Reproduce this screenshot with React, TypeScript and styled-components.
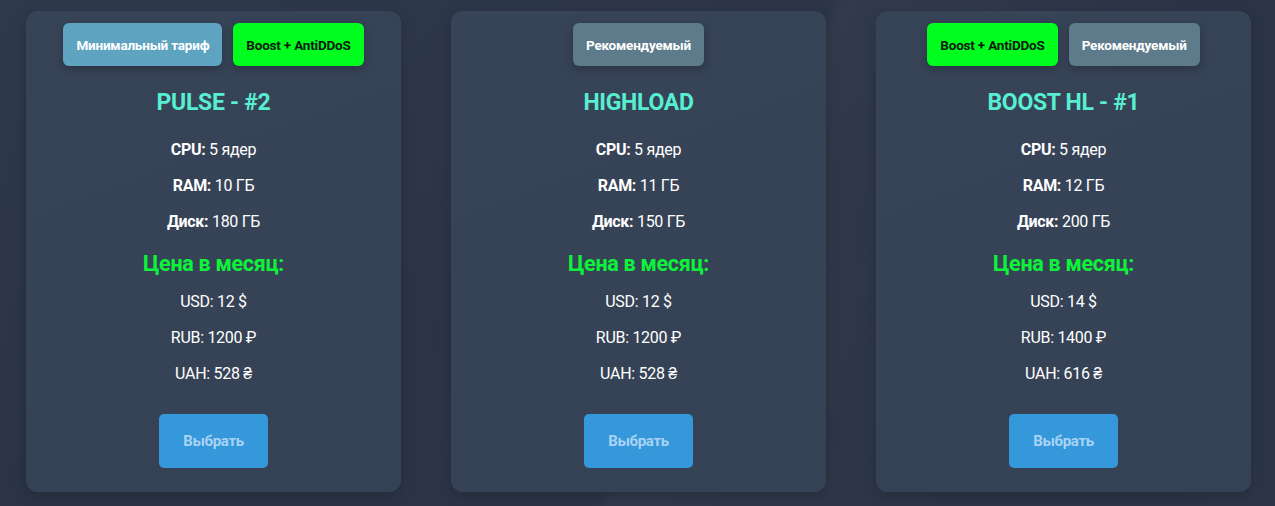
import React from "react";
import styled, { createGlobalStyle } from "styled-components";

const Global = createGlobalStyle`
  html, body { margin: 0; padding: 0; }
  body {
    width: 1275px;
    height: 506px;
    overflow: hidden;
    font-family: "Roboto", "Liberation Sans", sans-serif;
    background: #2c3547;
  }
`;

const Page = styled.div`
  width: 1275px;
  height: 506px;
  box-sizing: border-box;
  padding: 11px 24px 0 26px;
  display: grid;
  grid-template-columns: repeat(3, 375px);
  column-gap: 50px;
  align-items: start;
  background:
    linear-gradient(115deg, rgba(255,255,255,0) 0%, rgba(255,255,255,0) 55%, rgba(255,255,255,0.025) 56%, rgba(255,255,255,0.0) 80%),
    linear-gradient(160deg, #2f394c 0%, #2b3446 50%, #2c3547 100%);
`;

const Card = styled.section`
  height: 481px;
  box-sizing: border-box;
  background: linear-gradient(160deg, #374457 0%, #364356 60%, #354255 100%);
  border-radius: 12px;
  box-shadow: 0 4px 14px rgba(0, 0, 0, 0.18);
  padding: 12px 10px 0;
  display: flex;
  flex-direction: column;
  align-items: center;
  color: #ffffff;
`;

const Badges = styled.div`
  display: flex;
  justify-content: center;
  gap: 11px;
`;

const Badge = styled.span<{ $bg: string; $fg: string }>`
  height: 43px;
  box-sizing: border-box;
  padding: 0 13px;
  display: inline-flex;
  align-items: center;
  border-radius: 6px;
  background: ${(p) => p.$bg};
  color: ${(p) => p.$fg};
  font-size: 13.5px;
  font-weight: 700;
  letter-spacing: -0.2px;
  box-shadow: 0 3px 8px rgba(0, 0, 0, 0.25);
`;

const Title = styled.h2`
  margin: 23px 0 0;
  height: 28px;
  line-height: 28px;
  font-size: 23px;
  font-weight: 700;
  color: #57eed2;
  letter-spacing: -0.3px;
`;

const Line = styled.p`
  margin: 0;
  height: 36px;
  line-height: 36px;
  font-size: 16px;
  color: #ffffff;
  letter-spacing: -0.3px;
  b { font-weight: 700; }
`;

const Specs = styled.div`
  margin-top: 15px;
  display: flex;
  flex-direction: column;
  align-items: center;
`;

const PriceHead = styled.h3`
  margin: 6px 0 0;
  height: 38px;
  line-height: 36px;
  font-size: 21.5px;
  font-weight: 700;
  color: #0cf33a;
  letter-spacing: -0.3px;
`;

const Choose = styled.button`
  margin-top: 22px;
  width: 109px;
  height: 54px;
  border: none;
  border-radius: 5px;
  background: #3598db;
  color: #a9d3f4;
  font-family: inherit;
  font-size: 15px;
  font-weight: 700;
  letter-spacing: -0.3px;
  cursor: pointer;
`;

type BadgeT = { text: string; bg: string; fg: string };
type Plan = {
  badges: BadgeT[];
  name: string;
  ram: number;
  disk: number;
  usd: number;
  rub: number;
  uah: number;
};

const MIN: BadgeT = { text: "Минимальный тариф", bg: "#5ea4c1", fg: "#ffffff" };
const BOOST: BadgeT = { text: "Boost + AntiDDoS", bg: "#00ff1f", fg: "#0b1a0c" };
const REC: BadgeT = { text: "Рекомендуемый", bg: "#5e7b8b", fg: "#ffffff" };

const plans: Plan[] = [
  { badges: [MIN, BOOST], name: "PULSE - #2", ram: 10, disk: 180, usd: 12, rub: 1200, uah: 528 },
  { badges: [REC], name: "HIGHLOAD", ram: 11, disk: 150, usd: 12, rub: 1200, uah: 528 },
  { badges: [BOOST, REC], name: "BOOST HL - #1", ram: 12, disk: 200, usd: 14, rub: 1400, uah: 616 },
];

export default function App() {
  return (
    <>
      <Global />
      <Page>
        {plans.map((p) => (
          <Card key={p.name}>
            <Badges>
              {p.badges.map((b) => (
                <Badge key={b.text} $bg={b.bg} $fg={b.fg}>
                  {b.text}
                </Badge>
              ))}
            </Badges>
            <Title>{p.name}</Title>
            <Specs>
              <Line><b>CPU:</b> 5 ядер</Line>
              <Line><b>RAM:</b> {p.ram} ГБ</Line>
              <Line><b>Диск:</b> {p.disk} ГБ</Line>
              <PriceHead>Цена в месяц:</PriceHead>
              <Line>USD: {p.usd} $</Line>
              <Line>RUB: {p.rub} ₽</Line>
              <Line>UAH: {p.uah} ₴</Line>
            </Specs>
            <Choose>Выбрать</Choose>
          </Card>
        ))}
      </Page>
    </>
  );
}
